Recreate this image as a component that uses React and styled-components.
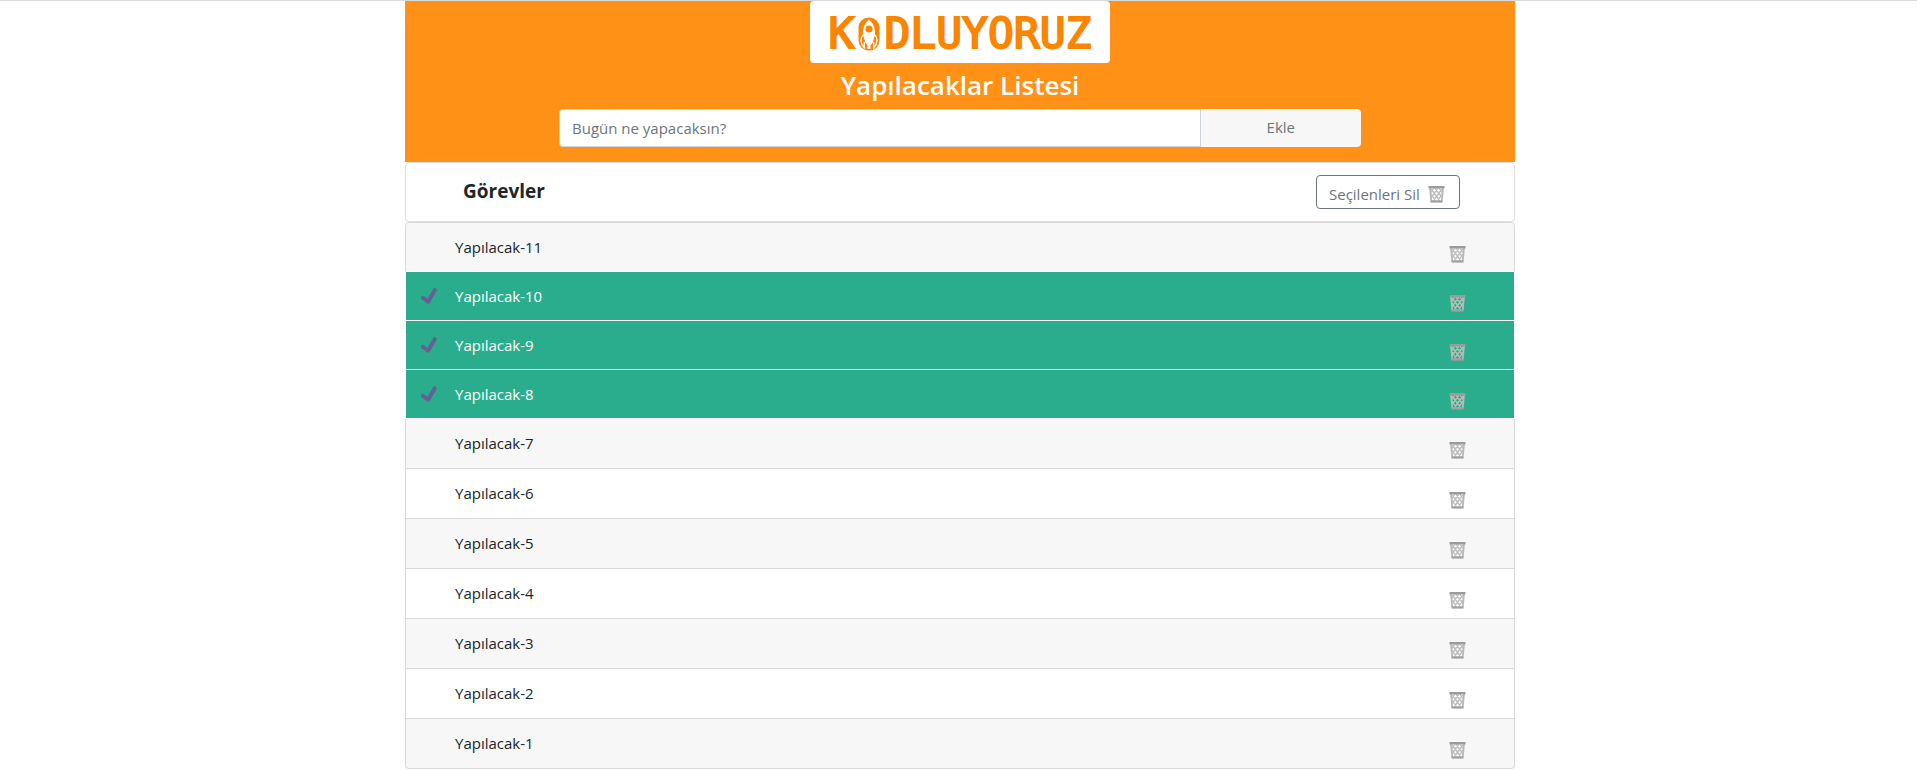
import React, { useState } from "react";
import styled, { createGlobalStyle, css } from "styled-components";

const GlobalStyle = createGlobalStyle`
  *, *::before, *::after { box-sizing: border-box; }
  body {
    margin: 0;
    border-top: 1px solid #dadada;
    background: #fff;
    color: #212529;
    font-family: "Segoe UI", "Open Sans", "Noto Sans", sans-serif;
    font-size: 15px;
    line-height: 24px;
  }
  button, input { font: inherit; }
`;

const Page = styled.main`
  max-width: 1113px;
  margin: 0 auto;
  padding-left: 3px;
`;

const Header = styled.header`
  display: flex;
  flex-direction: column;
  align-items: center;
  padding-bottom: 15px;
  background: #ff9117;
`;

const Logo = styled.div`
  display: flex;
  align-items: center;
  justify-content: center;
  gap: 4px;
  width: 300px;
  height: 62px;
  padding-top: 3px;
  border-radius: 4px;
  background: #fff;
  color: #fa8500;
  font-family: "DejaVu Sans Mono", monospace;
  font-size: 43px;
  line-height: 59px;
  -webkit-text-stroke: 2px #fa8500;
  stroke-linejoin: round;
`;

const Title = styled.h1`
  margin: 5px 0 7px;
  color: #fff;
  font-size: 26px;
  font-weight: 600;
  line-height: 34px;
`;

const AddForm = styled.form`
  display: flex;
  width: calc(100% - 308px);
  height: 38px;
`;

const TaskInput = styled.input`
  flex: 1;
  min-width: 0;
  padding: 6px 12px;
  border: 1px solid #ced4da;
  border-radius: 4px 0 0 4px;
  background: #fff;
  color: #495057;
  &::placeholder { color: #6c757d; opacity: 1; }
`;

const AddButton = styled.button`
  width: 20%;
  padding: 0 0 2px;
  border: 0;
  border-radius: 0 4px 4px 0;
  background: #f7f7f7;
  color: #6c757d;
`;

const Toolbar = styled.section`
  display: flex;
  align-items: center;
  justify-content: space-between;
  height: 60px;
  padding: 0 54px 0 57px;
  border: 1px solid #dfdfdf;
  border-radius: 4px;
`;

const Heading = styled.h2`
  margin: 0;
  padding-bottom: 2px;
  font-size: 19px;
  font-weight: 700;
  line-height: 24px;
`;

const ClearButton = styled.button`
  display: flex;
  align-items: center;
  justify-content: space-between;
  width: 144px;
  height: 34px;
  padding: 4px 14px 0 12px;
  border: 1px solid #6c757d;
  border-radius: 4px;
  background: #fff;
  color: #6c757d;
`;

const List = styled.ul`
  margin: 0;
  padding: 0;
  list-style: none;
  border-top: 1px solid #d9d9d9;
  border-radius: 4px;
`;

const Item = styled.li`
  display: flex;
  align-items: flex-start;
  height: 50px;
  padding: 0 48px 0 15px;
  border: 1px solid #d9d9d9;
  border-top: 0;
  background: #fff;
  &:nth-child(odd) { background: #f7f7f7; }
  &:first-child { height: 49px; border-bottom-color: #fff; border-radius: 4px 4px 0 0; }
  &:last-child { border-radius: 0 0 4px 4px; }
  ${(p) => p.$done && css`
    && {
      height: 49px;
      border-color: #fff;
      background: #2aad8c;
      color: #fff;
    }
  `}
`;

const Mark = styled.span`
  display: flex;
  width: 34px;
  padding-top: 16px;
`;

const Label = styled.span`
  flex: 1;
  padding-top: 12px;
`;

const DeleteButton = styled.button`
  display: flex;
  margin: 23px 0 0;
  padding: 0;
  border: 0;
  background: none;
`;

const Trash = () => (
  <svg width="17" height="17" viewBox="0 0 17 17" fill="none" aria-hidden="true">
    <path d="M2 2 3.300 15.500M15 2 13.700 15.500" stroke="#b8b8b8" strokeWidth="1.800" />
    <path d="M3 3 12 15M7 2 13.500 11M11 2 14 6.500M3 8 7.500 15M14 3 5 15M10 2 3.500 11M6 2 3 6.500M14 8 9.500 15" stroke="#bdbdbd" strokeWidth="1.300" />
    <path d="M.5 1.200h16" stroke="#9b9b9b" strokeWidth="2.400" />
    <path d="M2.500 15.500h12" stroke="#a0a0a0" strokeWidth="2.200" />
  </svg>
);

const Check = () => (
  <svg width="16" height="16" viewBox="0 0 16 16" fill="none" aria-hidden="true">
    <path d="M2 9.800 7.200 13.600 13.800 2.200" stroke="#655f98" strokeWidth="4" strokeLinecap="round" strokeLinejoin="round" />
  </svg>
);

const Rocket = () => (
  <svg width="22" height="34" viewBox="0 0 22 34" fill="none" aria-hidden="true">
    <rect x="0.5" y="0.5" width="21" height="33" rx="10" fill="#fa8500" />
    <path d="M11 2.500C6 7 4.500 12 5 18l2.500 8 2 2v4h3v-4l2-2L17 18c.5-6-1-11-6-15.500z" fill="#fff" />
    <path d="M4.500 18C2.500 22 2.500 27 6.500 31c-.5-3-.5-4 0-6M17.500 18c2 4 2 9-2 13 .5-3 .5-4 0-6" stroke="#fff" strokeWidth="1.300" />
    <circle cx="11" cy="12" r="3.600" fill="#fa8500" />
  </svg>
);

const initialTasks = Array.from({ length: 11 }, (_, i) => {
  const id = 11 - i;
  return { id, text: `Yapılacak-${id}`, done: id >= 8 && id <= 10 };
});

export default function App() {
  const [tasks, setTasks] = useState(initialTasks);
  const [draft, setDraft] = useState("");

  const add = (e) => {
    e.preventDefault();
    if (!draft.trim()) return;
    setTasks([{ id: Date.now(), text: draft.trim(), done: false }, ...tasks]);
    setDraft("");
  };
  const toggle = (id) =>
    setTasks(tasks.map((t) => (t.id === id ? { ...t, done: !t.done } : t)));

  return (
    <>
      <GlobalStyle />
      <Page>
        <Header>
          <Logo><span>K</span><Rocket /><span>DLUYORUZ</span></Logo>
          <Title>Yapılacaklar Listesi</Title>
          <AddForm onSubmit={add}>
            <TaskInput
              aria-label="Bugün ne yapacaksın?"
              placeholder="Bugün ne yapacaksın?"
              value={draft}
              onChange={(e) => setDraft(e.target.value)}
            />
            <AddButton type="submit">Ekle</AddButton>
          </AddForm>
        </Header>
        <Toolbar>
          <Heading>Görevler</Heading>
          <ClearButton type="button" onClick={() => setTasks(tasks.filter((t) => !t.done))}>
            Seçilenleri Sil <Trash />
          </ClearButton>
        </Toolbar>
        <List>
          {tasks.map((t) => (
            <Item key={t.id} $done={t.done} onClick={() => toggle(t.id)}>
              <Mark>{t.done && <Check />}</Mark>
              <Label>{t.text}</Label>
              <DeleteButton
                type="button"
                aria-label={`${t.text} sil`}
                onClick={(e) => {
                  e.stopPropagation();
                  setTasks(tasks.filter((x) => x.id !== t.id));
                }}
              >
                <Trash />
              </DeleteButton>
            </Item>
          ))}
        </List>
      </Page>
    </>
  );
}
